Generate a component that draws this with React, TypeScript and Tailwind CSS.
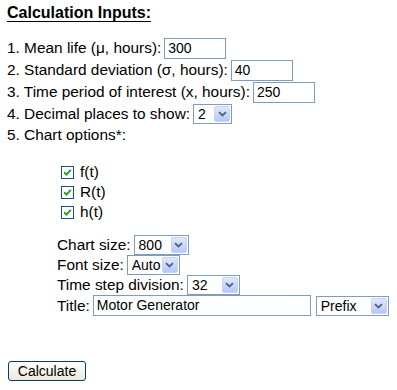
import React, { useState } from "react";

const font = { fontFamily: '"Liberation Sans", Arial, sans-serif' };

// XP style combo box: real select plus the blue arrow button drawn over it
const Combo: React.FC<{ value: string; options: string[]; width: string }> = ({ value, options, width }) => {
    const [val, setVal] = useState<string>(value);
    return (
        <span className={`relative inline-flex h-[20px] ${width}`}>
            <select
                value={val}
                onChange={(e) => setVal(e.target.value)}
                className="h-full w-full appearance-none border border-[#7f9db9] bg-white pl-[4px] text-[14px] leading-none text-black outline-none"
                style={font}
            >
                {options.map((o) => (
                    <option key={o}>{o}</option>
                ))}
            </select>
            <span className="pointer-events-none absolute right-[2px] top-[2px] flex h-[16px] w-[16px] items-center justify-center rounded-[2px] border border-[#c3d3fd] bg-gradient-to-b from-[#e0e8fe] to-[#b6c8f6]">
                <svg width="9" height="6" viewBox="0 0 9 6">
                    <path d="M1 1.2 L4.5 4.5 L8 1.2" fill="none" stroke="#4d6185" strokeWidth="1.8" />
                </svg>
            </span>
        </span>
    );
};

const TextBox: React.FC<{ value: string; width: string }> = ({ value, width }) => {
    const [val, setVal] = useState<string>(value);
    return (
        <input
            value={val}
            onChange={(e) => setVal(e.target.value)}
            className={`h-[21px] ${width} border border-[#7f9db9] bg-white px-[3px] text-[14px] text-black outline-none`}
            style={font}
        />
    );
};

const Check: React.FC<{ label: string }> = ({ label }) => (
    <div className="flex h-[20px] items-center gap-[6px]">
        <span className="flex h-[13px] w-[13px] items-center justify-center border border-[#1c5180] bg-white">
            <svg width="9" height="9" viewBox="0 0 9 9">
                <path d="M1.2 4.2 L3.5 6.6 L7.8 1.8" fill="none" stroke="#21a121" strokeWidth="2" />
            </svg>
        </span>
        <span>{label}</span>
    </div>
);

export default function App() {
    return (
        <div className="h-[390px] w-[397px] bg-white pl-[7px] pt-[3px] text-[15.4px] text-black" style={font}>
            <h3 className="text-[16px] font-bold leading-[20px] underline underline-offset-[3px]">Calculation Inputs:</h3>

            <div className="mt-[14px] flex flex-col">
                <div className="flex h-[22px] items-center gap-[3px]">
                    <span>1. Mean life (μ, hours):</span>
                    <TextBox value="300" width="w-[62px]" />
                </div>
                <div className="flex h-[22px] items-center gap-[3px]">
                    <span>2. Standard deviation (σ, hours):</span>
                    <TextBox value="40" width="w-[62px]" />
                </div>
                <div className="flex h-[22px] items-center gap-[3px]">
                    <span>3. Time period of interest (x, hours):</span>
                    <TextBox value="250" width="w-[62px]" />
                </div>
                <div className="flex h-[22px] items-center gap-[3px]">
                    <span>4. Decimal places to show:</span>
                    <Combo value="2" options={["0", "1", "2", "3", "4"]} width="w-[39px]" />
                </div>
                <div className="flex h-[20px] items-center">
                    <span>5. Chart options*:</span>
                </div>
            </div>

            <div className="mt-[17px] flex flex-col pl-[54px]">
                <Check label="f(t)" />
                <Check label="R(t)" />
                <Check label="h(t)" />
            </div>

            <div className="mt-[12px] flex flex-col pl-[50px]">
                <div className="flex h-[21px] items-center gap-[3px]">
                    <span>Chart size:</span>
                    <Combo value="800" options={["400", "600", "800", "1000"]} width="w-[55px]" />
                </div>
                <div className="flex h-[20px] items-center gap-[3px]">
                    <span>Font size:</span>
                    <Combo value="Auto" options={["Auto", "10", "12", "14"]} width="w-[53px]" />
                </div>
                <div className="flex h-[20px] items-center gap-[3px]">
                    <span>Time step division:</span>
                    <Combo value="32" options={["16", "32", "64", "128"]} width="w-[53px]" />
                </div>
                <div className="flex h-[21px] items-center gap-[3px]">
                    <span>Title:</span>
                    <TextBox value="Motor Generator" width="w-[218px]" />
                    <span className="ml-[2px]">
                        <Combo value="Prefix" options={["Prefix", "Suffix", "None"]} width="w-[73px]" />
                    </span>
                </div>
            </div>

            <button
                className="ml-[1px] mt-[45px] h-[20px] w-[78px] rounded-[3px] border border-[#003c74] bg-gradient-to-b from-white to-[#ece9d8] text-[14px] leading-none text-black"
                style={font}
            >
                Calculate
            </button>
        </div>
    );
}
